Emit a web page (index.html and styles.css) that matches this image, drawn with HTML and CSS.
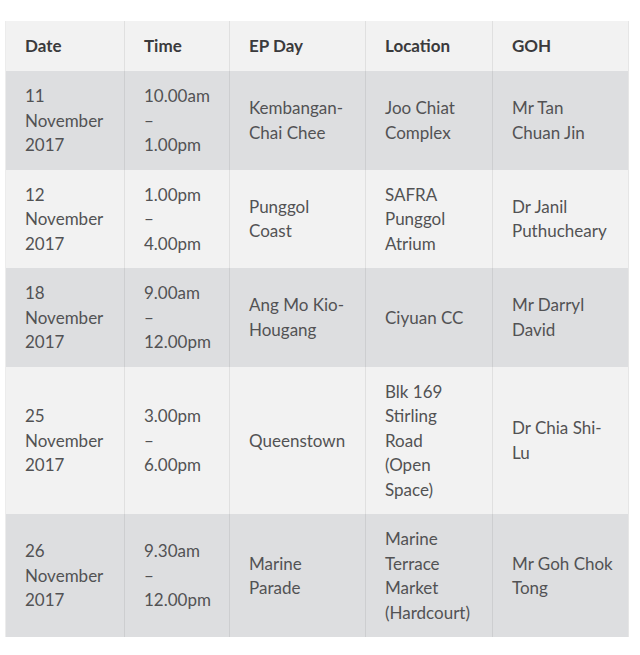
FILE: index.html
```html
<!DOCTYPE html>
<html>
<head>
<meta charset="utf-8">
<link rel="stylesheet" href="styles.css">
</head>
<body>
<div class="wrap">
<table class="ep">
  <colgroup>
    <col class="c1"><col class="c2"><col class="c3"><col class="c4"><col class="c5">
  </colgroup>
  <thead>
    <tr><th>Date</th><th>Time</th><th>EP Day</th><th>Location</th><th>GOH</th></tr>
  </thead>
  <tbody>
    <tr><td>11<br>November<br>2017</td><td>10.00am<br>–<br>1.00pm</td><td>Kembangan-<br>Chai Chee</td><td>Joo Chiat<br>Complex</td><td>Mr Tan<br>Chuan Jin</td></tr>
    <tr><td>12<br>November<br>2017</td><td>1.00pm<br>–<br>4.00pm</td><td>Punggol<br>Coast</td><td>SAFRA<br>Punggol<br>Atrium</td><td>Dr Janil<br>Puthucheary</td></tr>
    <tr><td>18<br>November<br>2017</td><td>9.00am<br>–<br>12.00pm</td><td>Ang Mo Kio-<br>Hougang</td><td>Ciyuan CC</td><td>Mr Darryl<br>David</td></tr>
    <tr><td>25<br>November<br>2017</td><td>3.00pm<br>–<br>6.00pm</td><td>Queenstown</td><td>Blk 169<br>Stirling<br>Road<br>(Open<br>Space)</td><td>Dr Chia Shi-<br>Lu</td></tr>
    <tr><td>26<br>November<br>2017</td><td>9.30am<br>–<br>12.00pm</td><td>Marine<br>Parade</td><td>Marine<br>Terrace<br>Market<br>(Hardcourt)</td><td>Mr Goh Chok<br>Tong</td></tr>
  </tbody>
</table>
</div>
</body>
</html>
```
FILE: styles.css
```css
html, body {
  margin: 0;
  padding: 0;
  background: #ffffff;
}
.wrap {
  padding: 21px 0 0 5px;
}
.ep {
  border-collapse: collapse;
  table-layout: fixed;
  width: 623px;
  font-family: Lato, "Open Sans", sans-serif;
  font-size: 17px;
  line-height: 24.5px;
  color: #525254;
  border-left: 1px solid #ececec;
  border-right: 1px solid #e6e6e6;
}
.c1 { width: 119px; }
.c2 { width: 105px; }
.c3 { width: 136px; }
.c4 { width: 127px; }
.c5 { width: 136px; }
.ep th, .ep td {
  text-align: left;
  vertical-align: middle;
  padding: 13px 19px 12px;
  white-space: nowrap;
  border-left: 1px solid rgba(0,0,0,0.07);
}
.ep th:first-child, .ep td:first-child {
  border-left: none;
}
.ep th {
  font-weight: 700;
  color: #3a3a3c;
  height: 25px;
}
.ep thead tr { background: #f2f2f2; }
.ep tbody tr:nth-child(odd) { background: #dddee0; }
.ep tbody tr:nth-child(even) { background: #f2f2f2; }
```
